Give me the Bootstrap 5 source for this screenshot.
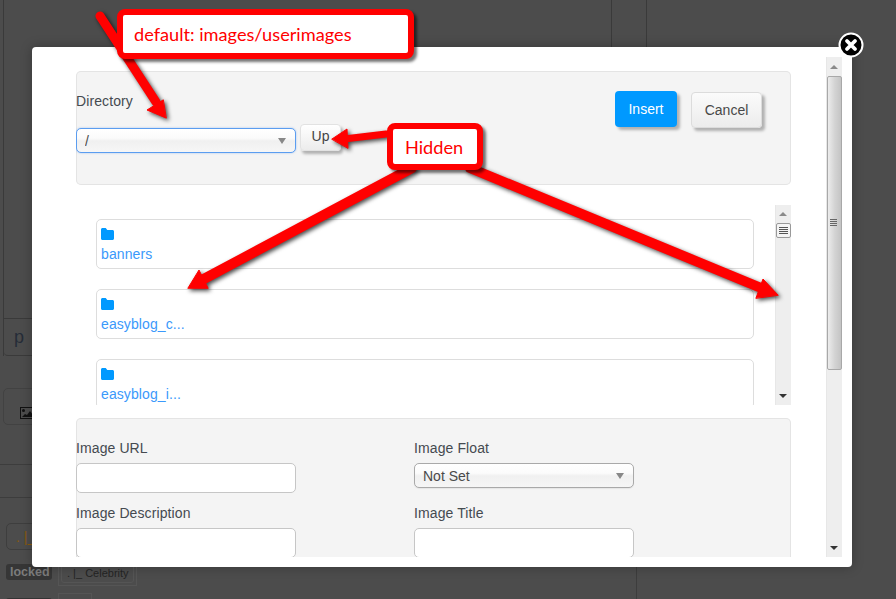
<!DOCTYPE html>
<html lang="en">
<head>
<meta charset="utf-8">
<title>Image manager</title>
<link href="https://cdn.jsdelivr.net/npm/bootstrap@5.3.0/dist/css/bootstrap.min.css" rel="stylesheet">
<style>
html,body{height:100%;}
body{background:#4c4c4c;overflow:hidden;font-family:"Liberation Sans",Arial,sans-serif;font-size:14px;color:#3a3a3a;line-height:20px;position:relative;}
/* dimmed page behind */
.bk-top{display:flex;margin-left:3px;height:356px;}
.bk-main{width:609px;border-left:1px solid #3a3a3a;border-right:1px solid #3a3a3a;}
.bk-upper{height:319px;border-bottom:1px solid #3a3a3a;}
.bk-p{height:37px;border-bottom:1px solid #3a3a3a;border-bottom-left-radius:4px;padding:8px 10px;font-size:18px;color:#252c38;}
.bk-side{width:35px;height:100px;border-right:1px solid #3a3a3a;}
.bk-imgbox{margin:32px 0 0 3px;width:100px;height:37px;border:1px solid #424242;border-radius:5px;padding:13px 0 0 16px;}
.bk-rule{width:400px;height:1px;background:#3d3d3d;}
.bk-r1{margin-top:39px;}
.bk-lower{margin-top:32px;width:637px;height:110px;border-top:1px solid #3d3d3d;border-right:1px solid #3d3d3d;padding:25px 0 0 6px;}
.bk-chip{width:100px;height:27px;border:1px solid #3e3e3e;border-radius:5px;padding:3px 9px;color:#8a5a10;}
.bk-row{display:flex;gap:6px;margin-top:10px;align-items:flex-start;}
.bk-locked{background:#363636;color:#7c7c7c;font-weight:700;font-size:12.5px;line-height:16px;padding:0 4px;border-radius:3px;margin-top:4px;width:46px;}
.bk-frame{border:1px solid #555;padding:2px;width:79px;height:26px;}
.bk-tag{border:1px solid #555;border-radius:3px;font-size:11px;line-height:18px;height:20px;padding:0 5px;color:#242424;white-space:nowrap;}
.bk-row2{margin-top:7px;}
.bk-locked2{width:46px;height:8px;background:#333;border-radius:3px 3px 0 0;margin-top:5px;}
.bk-frame2{width:34px;height:12px;border:1px solid #555;}
/* modal */
.dlg{position:absolute;left:32px;top:47px;width:820px;height:520px;background:#fff;border-radius:4px;box-shadow:0 0 12px rgba(0,0,0,.28);padding:10px 10px 10px 44px;display:flex;}
.dlg-view{width:715px;height:500px;overflow:hidden;padding-top:14px;flex:none;}
.pane{background:#f4f4f4;box-shadow:inset 0 0 0 1px #e4e4e4;border-radius:5px;}
.pane-top{height:114px;padding-top:20px;padding-right:29px;}
.lbl{display:block;margin:0;line-height:20px;color:#454a50;font-size:14px;letter-spacing:.1px;}
.fld-sel{width:220px;height:25px;padding:0 8px;font-size:14px;line-height:22px;border:1px solid #a9a9a9;border-radius:5px;color:#4a4a4a;
 background-color:#f6f6f6;
 background-image:url("data:image/svg+xml,%3Csvg xmlns='http://www.w3.org/2000/svg' width='8' height='6'%3E%3Cpath d='M0 0h8L4 6z' fill='%23888'/%3E%3C/svg%3E"),linear-gradient(#fff 0,#fbfbfb 40%,#f0f0f0 52%,#f6f6f6 100%);
 background-repeat:no-repeat,no-repeat;background-position:right 9px center,0 0;background-size:8px 6px,100% 100%;box-shadow:0 1px 1px rgba(0,0,0,.06);}
.fld-sel:focus,.fld-focus{border-color:#5b9df0;box-shadow:0 0 2px rgba(70,140,240,.5);outline:0;}
.fld-focus{margin-top:17px;}
.fld-in{width:220px;height:30px;border:1px solid #c6c6c6;border-radius:5px;background:#fff;padding:0 8px;font-size:14px;}
.btn-up{width:41px;height:27px;padding:0 0 3px;margin:13px 0 0 4px;font-size:14px;line-height:20px;color:#444;background:linear-gradient(#fff,#ececec);border:1px solid #e2e2e2;border-radius:4px;box-shadow:2px 3px 3px rgba(0,0,0,.28);}
.btn-ins{width:62px;height:36px;padding:1px 0 0;font-size:14px;color:#fff;background:#09f;border:0;border-radius:4px;box-shadow:3px 3px 3px rgba(0,0,0,.28);}
.btn-can{width:71px;height:36px;padding:0;margin-top:1px;font-size:14px;color:#484848;background:linear-gradient(#fbfbfb,#ececec);border:1px solid #dcdcdc;border-radius:4px;box-shadow:3px 3px 3px rgba(0,0,0,.28);}
.top-actions{gap:14px;}
.files{height:200px;margin-top:20px;display:flex;}
.files-list{width:699px;overflow:hidden;padding:14px 21px 0 20px;display:flex;flex-direction:column;gap:20px;}
.fitem{height:50px;flex:none;border:1px solid #ddd;border-radius:5px;padding:8px 4px 0 4px;background:#fff;}
.fitem svg{display:block;}
.fitem a{display:block;margin-top:4px;line-height:20px;font-size:14px;letter-spacing:.1px;color:#3a99fb;text-decoration:none;}
.pane-form{margin-top:13px;height:200px;padding-top:20px;}
.form-cl{width:338px;}
.form-row1{margin-bottom:10px;}
.fld-mt{margin-top:5px;}
/* scrollbars */
.sbar{width:16px;flex:none;background:#eee;display:flex;flex-direction:column;align-items:center;box-shadow:inset 1px 0 0 #e7e7e7;}
.sbar-outer{height:500px;margin-left:35px;}
.sbar-inner{height:200px;}
.sb-btn{height:19px;width:100%;display:flex;align-items:center;justify-content:center;flex:none;}
.sb-btn-s{height:18px;}
.sb-thumb{width:15px;flex:none;border:1px solid #a8a8a8;border-radius:2px;background:linear-gradient(90deg,#ececec,#d4d4d4 50%,#c4c4c4);display:flex;align-items:center;justify-content:center;}
.sb-thumb-o{height:294px;padding-right:2px;}
.sb-thumb-i{height:15px;background:#f4f4f4;border-color:#999;}
.sb-fill{flex:1 1 auto;}
/* overlay */
.over{position:absolute;left:0;top:0;width:896px;height:599px;pointer-events:none;}
.callout{position:absolute;background:#fff;border:6px solid #f00;border-radius:8px;color:#f00;font-family:Lato,"Liberation Sans",sans-serif;font-size:18.2px;box-shadow:3px 3px 3px rgba(0,0,0,.55);display:flex;align-items:center;}
.co-a{left:117px;top:9px;width:297px;height:50px;padding-left:11px;}
.co-b{left:387px;top:123px;width:96px;height:47px;padding-left:12px;}
.close-x{position:absolute;left:838px;top:32px;}
</style>
</head>
<body>
<div class="bk-top">
  <div class="bk-main"><div class="bk-upper"></div><div class="bk-p">p</div></div>
  <div class="bk-side"></div>
</div>
<div class="bk-imgbox">
  <svg width="14" height="12" viewBox="0 0 14 12"><rect x=".5" y=".5" width="13" height="11" fill="none" stroke="#111"/><circle cx="3.5" cy="3.5" r="1.5" fill="#111"/><path d="M2 10l3-3 2 1 3-4 3 4v2z" fill="#111"/></svg>
</div>
<div class="bk-rule bk-r1"></div>
<div class="bk-lower">
  <div class="bk-chip">. |_</div>
  <div class="bk-row">
    <div class="bk-locked">locked</div>
    <div class="bk-frame"><div class="bk-tag">. |_ Celebrity</div></div>
  </div>
  <div class="bk-row bk-row2"><div class="bk-locked2"></div><div class="bk-frame2"></div></div>
</div>

<div class="dlg">
  <div class="dlg-view">
    <div class="pane pane-top d-flex justify-content-between align-items-start">
      <div>
        <label class="lbl">Directory</label>
        <div class="d-flex align-items-start">
          <select class="form-select fld-sel fld-focus"><option>/</option></select>
          <button class="btn btn-up" type="button">Up</button>
        </div>
      </div>
      <div class="d-flex top-actions align-items-start">
        <button class="btn btn-ins" type="button">Insert</button>
        <button class="btn btn-can" type="button">Cancel</button>
      </div>
    </div>
    <div class="files">
      <div class="files-list">
        <div class="card fitem"><svg width="13" height="12" viewBox="0 0 13 12"><path d="M1.5 0h3.2l1.6 2h5.2c.8 0 1.5.7 1.5 1.5v7c0 .8-.7 1.5-1.5 1.5h-10C.7 12 0 11.300 0 10.500v-9C0 .7.7 0 1.500 0z" fill="#09f"/></svg><a href="#">banners</a></div>
        <div class="card fitem"><svg width="13" height="12" viewBox="0 0 13 12"><path d="M1.5 0h3.2l1.6 2h5.2c.8 0 1.5.7 1.5 1.5v7c0 .8-.7 1.5-1.5 1.5h-10C.7 12 0 11.300 0 10.500v-9C0 .7.7 0 1.500 0z" fill="#09f"/></svg><a href="#">easyblog_c...</a></div>
        <div class="card fitem"><svg width="13" height="12" viewBox="0 0 13 12"><path d="M1.5 0h3.2l1.6 2h5.2c.8 0 1.5.7 1.5 1.5v7c0 .8-.7 1.5-1.5 1.5h-10C.7 12 0 11.300 0 10.500v-9C0 .7.7 0 1.500 0z" fill="#09f"/></svg><a href="#">easyblog_i...</a></div>
      </div>
      <div class="sbar sbar-inner">
        <div class="sb-btn sb-btn-s"><svg width="8" height="4" viewBox="0 0 8 4"><path d="M4 0l4 4H0z" fill="#8a8a8a"/></svg></div>
        <div class="sb-thumb sb-thumb-i"><svg width="9" height="8" viewBox="0 0 9 8"><path d="M0 .5h9M0 2.500h9M0 4.500h9M0 6.500h9" stroke="#555"/></svg></div>
        <div class="sb-fill"></div>
        <div class="sb-btn sb-btn-s"><svg width="8" height="4" viewBox="0 0 8 4"><path d="M0 0h8L4 4z" fill="#333"/></svg></div>
      </div>
    </div>
    <div class="pane pane-form">
      <div class="d-flex form-row1">
        <div class="form-cl"><label class="lbl">Image URL</label><input class="form-control fld-in fld-mt" type="text"></div>
        <div><label class="lbl">Image Float</label><select class="form-select fld-sel fld-mt"><option>Not Set</option></select></div>
      </div>
      <div class="d-flex">
        <div class="form-cl"><label class="lbl">Image Description</label><input class="form-control fld-in fld-mt" type="text"></div>
        <div><label class="lbl">Image Title</label><input class="form-control fld-in fld-mt" type="text"></div>
      </div>
    </div>
  </div>
  <div class="sbar sbar-outer">
    <div class="sb-btn"><svg width="8" height="4" viewBox="0 0 8 4"><path d="M4 0l4 4H0z" fill="#8a8a8a"/></svg></div>
    <div class="sb-thumb sb-thumb-o"><svg width="7" height="8" viewBox="0 0 7 8"><path d="M0 .5h7M0 2.500h7M0 4.500h7M0 6.500h7" stroke="#666"/></svg></div>
    <div class="sb-fill"></div>
    <div class="sb-btn"><svg width="8" height="4" viewBox="0 0 8 4"><path d="M0 0h8L4 4z" fill="#333"/></svg></div>
  </div>
</div>

<svg class="over" viewBox="0 0 896 599" style="filter:drop-shadow(2px 2px 2px rgba(0,0,0,.7))">
  <g fill="#f00" stroke="#f00" stroke-linejoin="round" stroke-linecap="round">
    <path d="M100 16L156 102" stroke-width="9" fill="none"/>
    <path d="M166 118L147 110L163 100z" stroke-width="1"/>
    <path d="M386 134L344 139" stroke-width="7" fill="none"/>
    <path d="M332 139L347 129L348 148z" stroke-width="1"/>
    <path d="M412 168L200 281" stroke-width="10" fill="none"/>
    <path d="M188 288L199 270L208 288z" stroke-width="1"/>
    <path d="M470 168L766 290" stroke-width="10" fill="none"/>
    <path d="M778 295L763 279L756 298z" stroke-width="1"/>
  </g>
</svg>
<div class="callout co-a">default: images/userimages</div>
<div class="callout co-b">Hidden</div>
<svg class="close-x" width="26" height="26" viewBox="0 0 26 26">
  <circle cx="13" cy="13" r="11.500" fill="#000" stroke="#fff" stroke-width="2"/>
  <path d="M9 9l8 8M17 9l-8 8" stroke="#fff" stroke-width="3.800" stroke-linecap="round"/>
</svg>
<script src="https://cdn.jsdelivr.net/npm/bootstrap@5.3.0/dist/js/bootstrap.bundle.min.js"></script>
</body>
</html>
